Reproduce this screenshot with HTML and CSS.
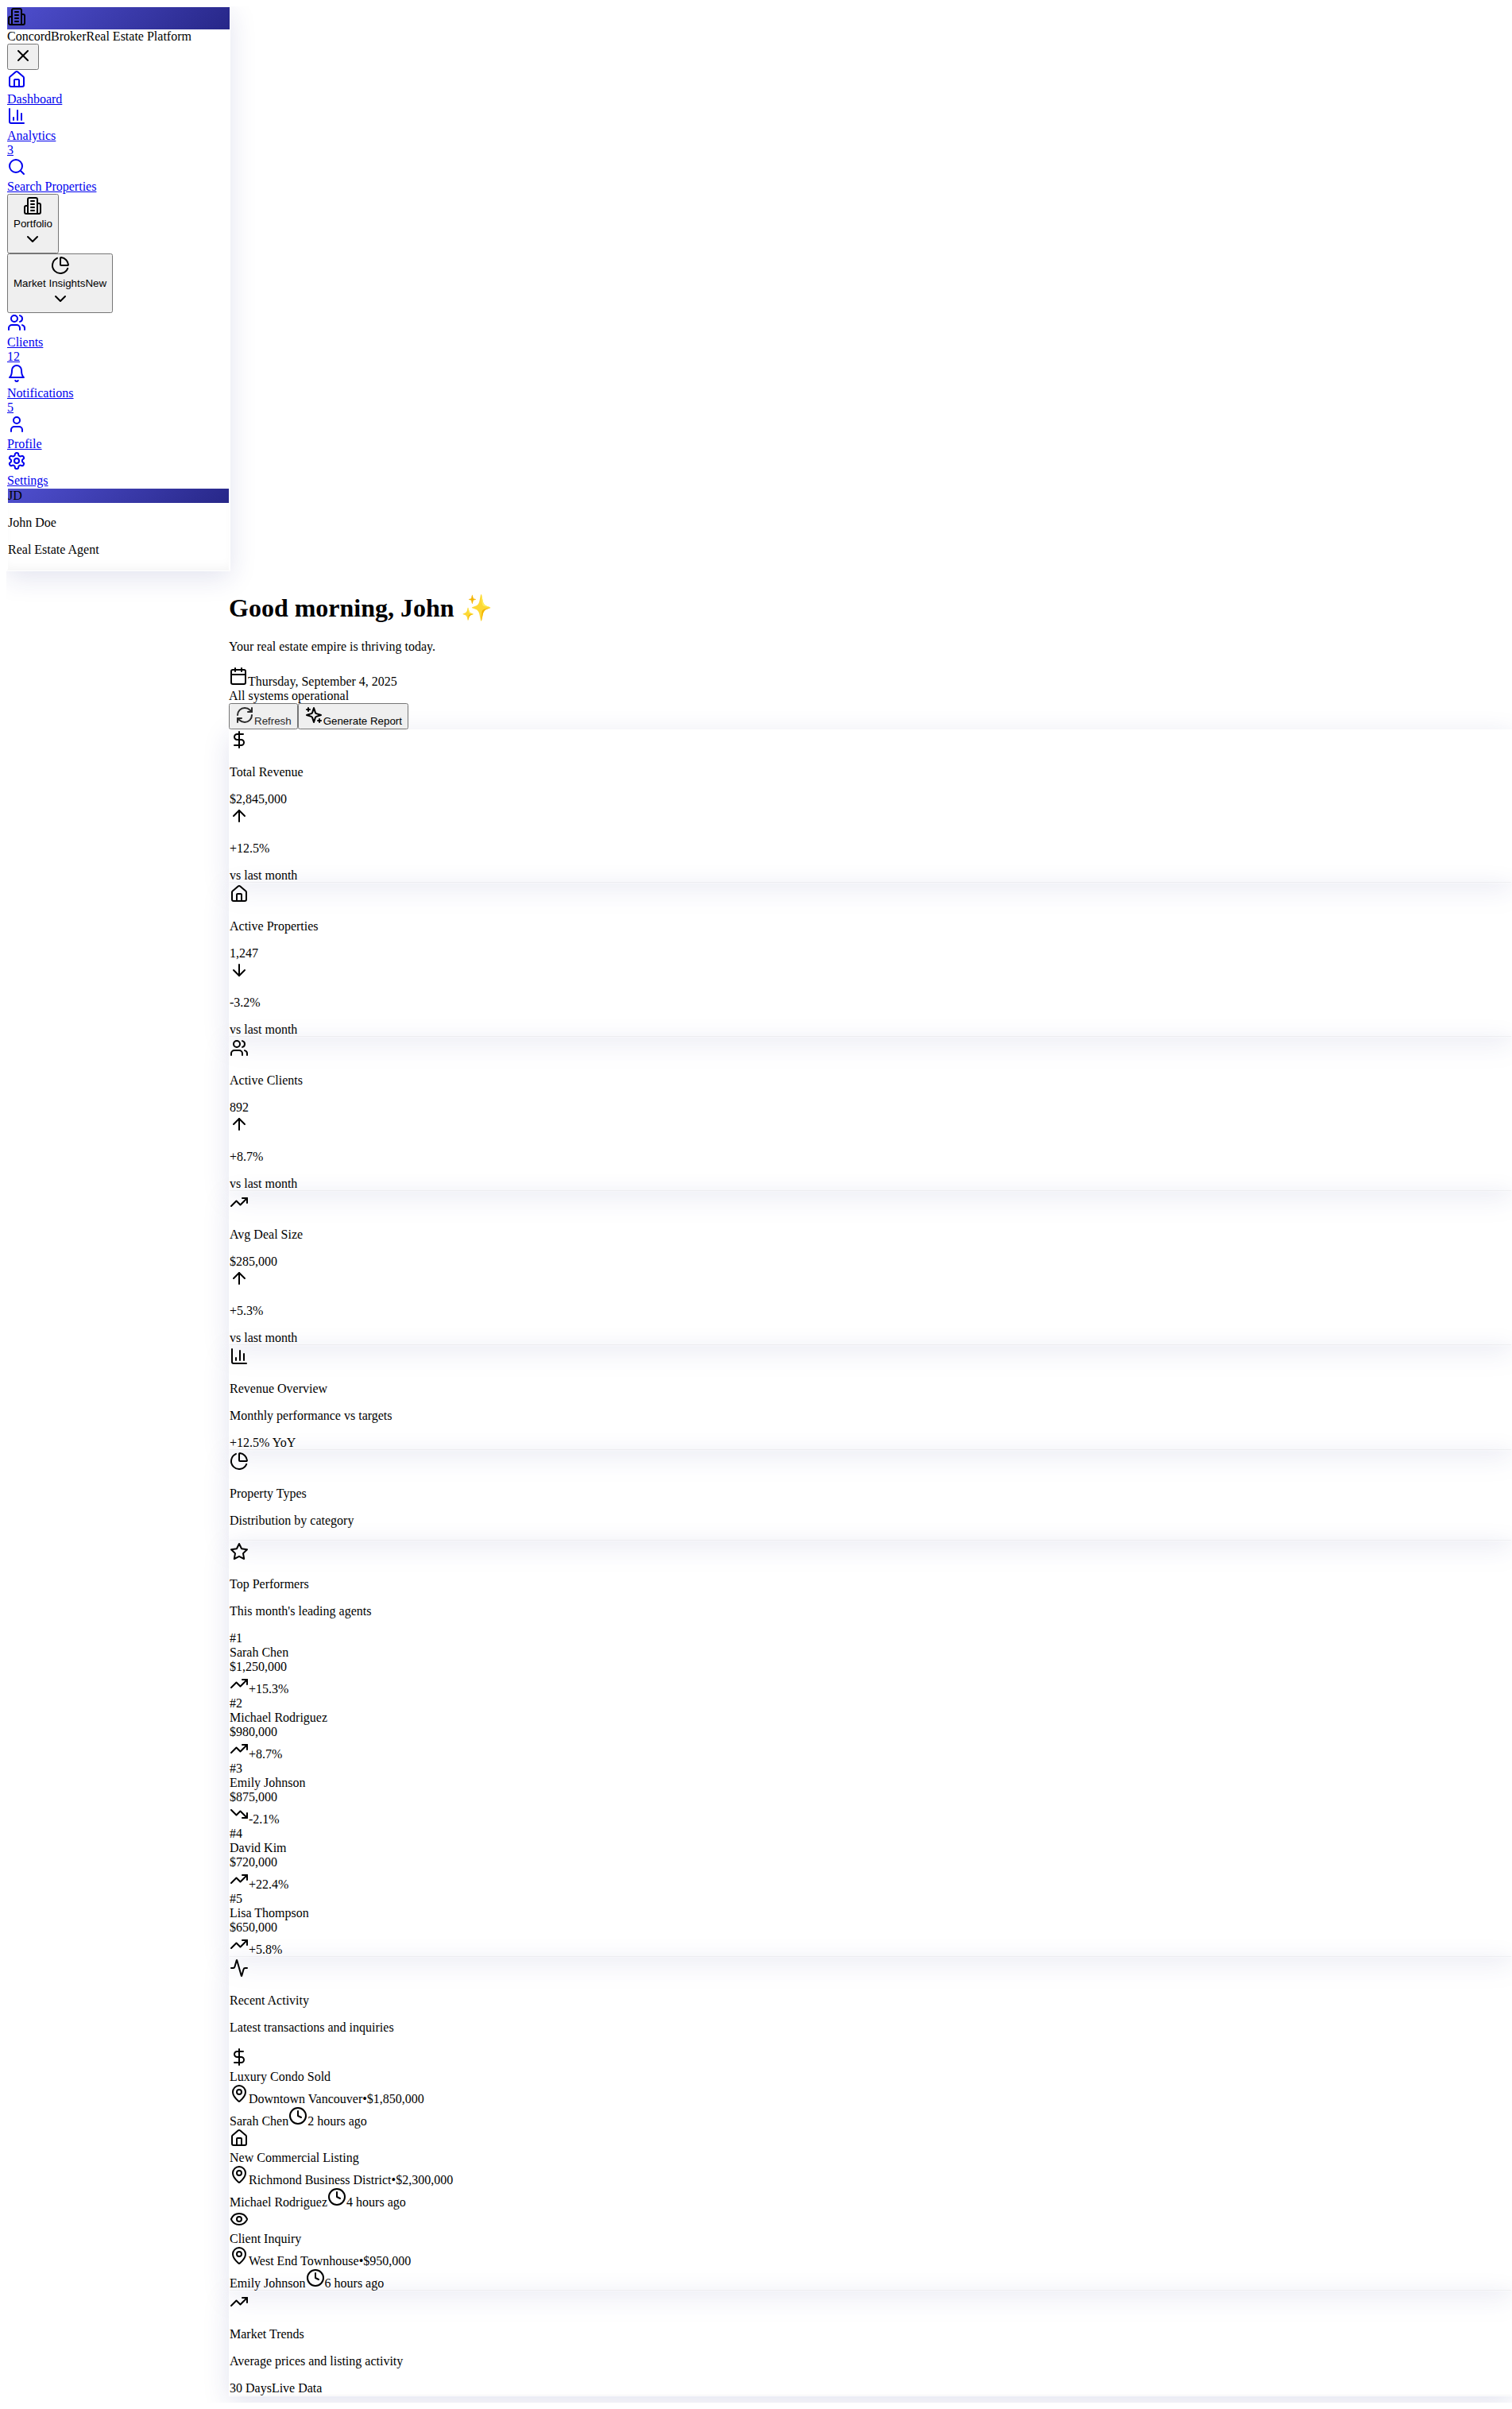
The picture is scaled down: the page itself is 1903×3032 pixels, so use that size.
FILE: index.html
```html
<!DOCTYPE html>
<html lang="en">
<head>
<meta charset="utf-8">
<title>ConcordBroker</title>
<link rel="stylesheet" href="styles.css">
</head>
<body>
<svg class="sprite" aria-hidden="true">
  <symbol id="building" viewBox="0 0 24 24"><path d="M6 22V4a2 2 0 0 1 2-2h8a2 2 0 0 1 2 2v18Z"/><path d="M6 12H4a2 2 0 0 0-2 2v6a2 2 0 0 0 2 2h2"/><path d="M18 9h2a2 2 0 0 1 2 2v9a2 2 0 0 1-2 2h-2"/><path d="M10 6h4"/><path d="M10 10h4"/><path d="M10 14h4"/><path d="M10 18h4"/></symbol>
  <symbol id="x" viewBox="0 0 24 24"><path d="M18 6 6 18"/><path d="m6 6 12 12"/></symbol>
  <symbol id="house" viewBox="0 0 24 24"><path d="M15 21v-8a1 1 0 0 0-1-1h-4a1 1 0 0 0-1 1v8"/><path d="M3 10a2 2 0 0 1 .709-1.528l7-5.999a2 2 0 0 1 2.582 0l7 5.999A2 2 0 0 1 21 10v9a2 2 0 0 1-2 2H5a2 2 0 0 1-2-2z"/></symbol>
  <symbol id="chart" viewBox="0 0 24 24"><path d="M3 3v16a2 2 0 0 0 2 2h16"/><path d="M18 17V9"/><path d="M13 17V5"/><path d="M8 17v-3"/></symbol>
  <symbol id="search" viewBox="0 0 24 24"><circle cx="11" cy="11" r="8"/><path d="m21 21-4.3-4.3"/></symbol>
  <symbol id="chevron" viewBox="0 0 24 24"><path d="m6 9 6 6 6-6"/></symbol>
  <symbol id="pie" viewBox="0 0 24 24"><path d="M21 12c.552 0 1.005-.449.95-.998a10 10 0 0 0-8.953-8.951c-.55-.055-.998.398-.998.95v8a1 1 0 0 0 1 1z"/><path d="M21.21 15.89A10 10 0 1 1 8 2.83"/></symbol>
  <symbol id="users" viewBox="0 0 24 24"><path d="M16 21v-2a4 4 0 0 0-4-4H6a4 4 0 0 0-4 4v2"/><circle cx="9" cy="7" r="4"/><path d="M22 21v-2a4 4 0 0 0-3-3.87"/><path d="M16 3.13a4 4 0 0 1 0 7.75"/></symbol>
  <symbol id="bell" viewBox="0 0 24 24"><path d="M6 8a6 6 0 0 1 12 0c0 7 3 9 3 9H3s3-2 3-9"/><path d="M10.3 21a1.94 1.94 0 0 0 3.4 0"/></symbol>
  <symbol id="user" viewBox="0 0 24 24"><path d="M19 21v-2a4 4 0 0 0-4-4H9a4 4 0 0 0-4 4v2"/><circle cx="12" cy="7" r="4"/></symbol>
  <symbol id="gear" viewBox="0 0 24 24"><path d="M12.22 2h-.44a2 2 0 0 0-2 2v.18a2 2 0 0 1-1 1.73l-.43.25a2 2 0 0 1-2 0l-.15-.08a2 2 0 0 0-2.73.73l-.22.38a2 2 0 0 0 .73 2.73l.15.1a2 2 0 0 1 1 1.72v.51a2 2 0 0 1-1 1.74l-.15.09a2 2 0 0 0-.73 2.73l.22.38a2 2 0 0 0 2.73.73l.15-.08a2 2 0 0 1 2 0l.43.25a2 2 0 0 1 1 1.73V20a2 2 0 0 0 2 2h.44a2 2 0 0 0 2-2v-.18a2 2 0 0 1 1-1.73l.43-.25a2 2 0 0 1 2 0l.15.08a2 2 0 0 0 2.73-.73l.22-.39a2 2 0 0 0-.73-2.73l-.15-.08a2 2 0 0 1-1-1.74v-.5a2 2 0 0 1 1-1.74l.15-.09a2 2 0 0 0 .73-2.73l-.22-.38a2 2 0 0 0-2.73-.73l-.15.08a2 2 0 0 1-2 0l-.43-.25a2 2 0 0 1-1-1.73V4a2 2 0 0 0-2-2z"/><circle cx="12" cy="12" r="3"/></symbol>
  <symbol id="calendar" viewBox="0 0 24 24"><path d="M8 2v4"/><path d="M16 2v4"/><rect width="18" height="18" x="3" y="4" rx="2"/><path d="M3 10h18"/></symbol>
  <symbol id="refresh" viewBox="0 0 24 24"><path d="M3 12a9 9 0 0 1 9-9 9.75 9.75 0 0 1 6.74 2.74L21 8"/><path d="M21 3v5h-5"/><path d="M21 12a9 9 0 0 1-9 9 9.75 9.75 0 0 1-6.74-2.74L3 16"/><path d="M8 16H3v5"/></symbol>
  <symbol id="sparkles" viewBox="0 0 24 24"><path d="m12 3-1.912 5.813a2 2 0 0 1-1.275 1.275L3 12l5.813 1.912a2 2 0 0 1 1.275 1.275L12 21l1.912-5.813a2 2 0 0 1 1.275-1.275L21 12l-5.813-1.912a2 2 0 0 1-1.275-1.275L12 3Z"/><path d="M5 3v4"/><path d="M19 17v4"/><path d="M3 5h4"/><path d="M17 19h4"/></symbol>
  <symbol id="dollar" viewBox="0 0 24 24"><path d="M12 2v20"/><path d="M17 5H9.500a3.500 3.500 0 0 0 0 7h5a3.500 3.500 0 0 1 0 7H6"/></symbol>
  <symbol id="up" viewBox="0 0 24 24"><path d="m5 12 7-7 7 7"/><path d="M12 19V5"/></symbol>
  <symbol id="down" viewBox="0 0 24 24"><path d="M12 5v14"/><path d="m19 12-7 7-7-7"/></symbol>
  <symbol id="trend-up" viewBox="0 0 24 24"><path d="m22 7-8.500 8.500-5-5L2 17"/><path d="M16 7h6v6"/></symbol>
  <symbol id="trend-down" viewBox="0 0 24 24"><path d="m22 17-8.500-8.500-5 5L2 7"/><path d="M16 17h6v-6"/></symbol>
  <symbol id="star" viewBox="0 0 24 24"><path d="M12 2l3.090 6.260L22 9.270l-5 4.870 1.180 6.880L12 17.770l-6.180 3.250L7 14.140 2 9.270l6.910-1.010L12 2z"/></symbol>
  <symbol id="activity" viewBox="0 0 24 24"><path d="M22 12h-2.480a2 2 0 0 0-1.930 1.460l-2.350 8.360a.25.25 0 0 1-.48 0L9.240 2.180a.25.25 0 0 0-.48 0l-2.350 8.360A2 2 0 0 1 4.490 12H2"/></symbol>
  <symbol id="pin" viewBox="0 0 24 24"><path d="M20 10c0 4.993-5.539 10.193-7.399 11.799a1 1 0 0 1-1.202 0C9.539 20.193 4 14.993 4 10a8 8 0 0 1 16 0"/><circle cx="12" cy="10" r="3"/></symbol>
  <symbol id="clock" viewBox="0 0 24 24"><circle cx="12" cy="12" r="10"/><path d="M12 6v6l4 2"/></symbol>
  <symbol id="eye" viewBox="0 0 24 24"><path d="M2.062 12.348a1 1 0 0 1 0-.696 10.750 10.750 0 0 1 19.876 0 1 1 0 0 1 0 .696 10.750 10.750 0 0 1-19.876 0"/><circle cx="12" cy="12" r="3"/></symbol>
</svg>

<aside class="sidebar glass">
  <div class="brand-mark"><svg class="icon"><use href="#building"/></svg></div>
  <div><span>ConcordBroker</span><span>Real Estate Platform</span></div>
  <button type="button" class="close" aria-label="Close menu"><svg class="icon"><use href="#x"/></svg></button>
  <nav>
    <a href="#"><div><svg class="icon"><use href="#house"/></svg></div><div>Dashboard</div></a>
    <a href="#"><div><svg class="icon"><use href="#chart"/></svg></div><div>Analytics</div><div>3</div></a>
    <a href="#"><div><svg class="icon"><use href="#search"/></svg></div><div>Search Properties</div></a>
    <button type="button"><div><svg class="icon"><use href="#building"/></svg></div><div>Portfolio</div><div><svg class="icon"><use href="#chevron"/></svg></div></button>
    <button type="button"><div><svg class="icon"><use href="#pie"/></svg></div><div>Market Insights<span>New</span></div><div><svg class="icon"><use href="#chevron"/></svg></div></button>
    <a href="#"><div><svg class="icon"><use href="#users"/></svg></div><div>Clients</div><div>12</div></a>
    <a href="#"><div><svg class="icon"><use href="#bell"/></svg></div><div>Notifications</div><div>5</div></a>
    <a href="#"><div><svg class="icon"><use href="#user"/></svg></div><div>Profile</div></a>
    <a href="#"><div><svg class="icon"><use href="#gear"/></svg></div><div>Settings</div></a>
  </nav>
  <div class="account">
    <div class="avatar">JD</div>
    <p>John Doe</p>
    <p>Real Estate Agent</p>
  </div>
</aside>

<main class="main">
  <header>
    <h1>Good morning, John ✨</h1>
    <p>Your real estate empire is thriving today.</p>
    <div><svg class="icon"><use href="#calendar"/></svg>Thursday, September 4, 2025</div>
    <div>All systems operational</div>
    <div class="actions"><button type="button" class="refresh"><svg class="icon"><use href="#refresh"/></svg>Refresh</button><button type="button"><svg class="icon"><use href="#sparkles"/></svg>Generate Report</button></div>
  </header>

  <section class="card glass">
    <div><svg class="icon"><use href="#dollar"/></svg></div>
    <p>Total Revenue</p>
    <div>$2,845,000</div>
    <div><svg class="icon"><use href="#up"/></svg></div>
    <p>+12.5%</p>
    <div>vs last month</div>
  </section>
  <section class="card glass">
    <div><svg class="icon"><use href="#house"/></svg></div>
    <p>Active Properties</p>
    <div>1,247</div>
    <div><svg class="icon"><use href="#down"/></svg></div>
    <p>-3.2%</p>
    <div>vs last month</div>
  </section>
  <section class="card glass">
    <div><svg class="icon"><use href="#users"/></svg></div>
    <p>Active Clients</p>
    <div>892</div>
    <div><svg class="icon"><use href="#up"/></svg></div>
    <p>+8.7%</p>
    <div>vs last month</div>
  </section>
  <section class="card glass">
    <div><svg class="icon"><use href="#trend-up"/></svg></div>
    <p>Avg Deal Size</p>
    <div>$285,000</div>
    <div><svg class="icon"><use href="#up"/></svg></div>
    <p>+5.3%</p>
    <div>vs last month</div>
  </section>

  <section class="card glass">
    <div><svg class="icon"><use href="#chart"/></svg></div>
    <p>Revenue Overview</p>
    <p>Monthly performance vs targets</p>
    <div>+12.5% YoY</div>
  </section>
  <section class="card glass">
    <div><svg class="icon"><use href="#pie"/></svg></div>
    <p>Property Types</p>
    <p>Distribution by category</p>
  </section>

  <section class="card glass">
    <div><svg class="icon"><use href="#star"/></svg></div>
    <p>Top Performers</p>
    <p>This month's leading agents</p>
    <div>#1</div><div>Sarah Chen</div><div>$1,250,000</div>
    <div><svg class="icon"><use href="#trend-up"/></svg>+15.3%</div>
    <div>#2</div><div>Michael Rodriguez</div><div>$980,000</div>
    <div><svg class="icon"><use href="#trend-up"/></svg>+8.7%</div>
    <div>#3</div><div>Emily Johnson</div><div>$875,000</div>
    <div><svg class="icon"><use href="#trend-down"/></svg>-2.1%</div>
    <div>#4</div><div>David Kim</div><div>$720,000</div>
    <div><svg class="icon"><use href="#trend-up"/></svg>+22.4%</div>
    <div>#5</div><div>Lisa Thompson</div><div>$650,000</div>
    <div><svg class="icon"><use href="#trend-up"/></svg>+5.8%</div>
  </section>

  <section class="card glass">
    <div><svg class="icon"><use href="#activity"/></svg></div>
    <p>Recent Activity</p>
    <p>Latest transactions and inquiries</p>
    <div><svg class="icon"><use href="#dollar"/></svg></div>
    <div>Luxury Condo Sold</div>
    <div><svg class="icon"><use href="#pin"/></svg><span>Downtown Vancouver</span><span>•</span><span>$1,850,000</span></div>
    <div><span>Sarah Chen</span><svg class="icon"><use href="#clock"/></svg><span>2 hours ago</span></div>
    <div><svg class="icon"><use href="#house"/></svg></div>
    <div>New Commercial Listing</div>
    <div><svg class="icon"><use href="#pin"/></svg><span>Richmond Business District</span><span>•</span><span>$2,300,000</span></div>
    <div><span>Michael Rodriguez</span><svg class="icon"><use href="#clock"/></svg><span>4 hours ago</span></div>
    <div><svg class="icon"><use href="#eye"/></svg></div>
    <div>Client Inquiry</div>
    <div><svg class="icon"><use href="#pin"/></svg><span>West End Townhouse</span><span>•</span><span>$950,000</span></div>
    <div><span>Emily Johnson</span><svg class="icon"><use href="#clock"/></svg><span>6 hours ago</span></div>
  </section>

  <section class="card glass">
    <div><svg class="icon"><use href="#trend-up"/></svg></div>
    <p>Market Trends</p>
    <p>Average prices and listing activity</p>
    <div><span>30 Days</span><span>Live Data</span></div>
  </section>
</main>
</body>
</html>
```
FILE: styles.css
```css
body {
  margin: 8px 0 8px 8px;
  background: #fff;
  color: #000;
  font-family: "Liberation Serif", "Times New Roman", serif;
  font-size: 16px;
}

.sprite {
  display: none;
}

.icon {
  width: 24px;
  height: 24px;
  fill: none;
  stroke: currentColor;
  stroke-width: 2px;
  stroke-linecap: round;
  stroke-linejoin: round;
}

a {
  color: #0000ee;
}

button {
  font-family: "Liberation Sans", Arial, sans-serif;
}

h1 {
  margin-top: 27px;
}

.glass {
  border: 1px solid rgba(255, 255, 255, 0.2);
  background: rgba(255, 255, 255, 0.35);
  box-shadow: 0 8px 32px rgba(31, 38, 135, 0.13), inset 0 -1px 0 rgba(0, 0, 0, 0.04);
}

.sidebar {
  width: 280px;
}

.brand-mark,
.avatar {
  background: linear-gradient(135deg, #4f4fcf, #272788);
}

.close,
nav > a,
nav > button {
  display: block;
}

.account {
  display: flow-root;
  border: 1px solid rgba(255, 255, 255, 0.2);
  box-shadow: inset 0 -8px 16px -8px rgba(0, 0, 0, 0.06);
}

.main {
  margin-left: 280px;
  padding-bottom: 8px;
}

.actions {
  display: flex;
}

.refresh {
  color: #2a2a2a;
}
```
